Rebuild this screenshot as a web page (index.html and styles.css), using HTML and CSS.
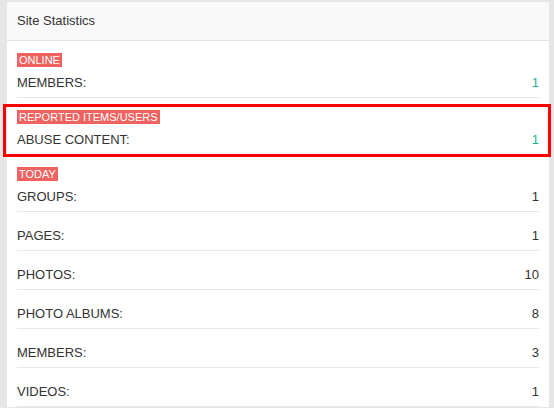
FILE: index.html
```html
<!DOCTYPE html>
<html>
<head>
<meta charset="utf-8">
<link rel="stylesheet" href="styles.css">
</head>
<body>
<div class="panel">
  <div class="panel-heading">Site Statistics</div>
  <div class="panel-body">
    <div class="section">
      <span class="tag">Online</span>
      <div class="row"><span>MEMBERS:</span><span class="val ok">1</span></div>
    </div>
    <div class="section marked">
      <span class="tag">Reported Items/Users</span>
      <div class="row"><span>ABUSE CONTENT:</span><span class="val ok">1</span></div>
    </div>
    <div class="section">
      <span class="tag">Today</span>
      <div class="row"><span>GROUPS:</span><span class="val">1</span></div>
      <div class="row"><span>PAGES:</span><span class="val">1</span></div>
      <div class="row"><span>PHOTOS:</span><span class="val">10</span></div>
      <div class="row"><span>PHOTO ALBUMS:</span><span class="val">8</span></div>
      <div class="row"><span>MEMBERS:</span><span class="val">3</span></div>
      <div class="row"><span>VIDEOS:</span><span class="val">1</span></div>
    </div>
  </div>
</div>
</body>
</html>
```
FILE: styles.css
```css
html, body {
  margin: 0;
  padding: 0;
}
body {
  background: #e6e6e6;
  padding: 2px 5px 0 7px;
  font-family: "Liberation Sans", Arial, sans-serif;
  font-size: 13px;
  color: #333;
}
.panel {
  background: #fff;
}
.panel-heading {
  background: #f9f9f9;
  height: 38px;
  line-height: 38px;
  padding: 0 10px;
  border-bottom: 1px solid #e3e3e3;
}
.panel-body {
  padding: 12px 10px 0 10px;
}
.section {
  position: relative;
  margin-bottom: 12px;
}
.tag {
  display: inline-block;
  background: #f0625f;
  color: #fff;
  font-size: 11px;
  line-height: 12px;
  padding: 1px 2px;
  text-transform: uppercase;
  vertical-align: top;
}
.row {
  display: flex;
  justify-content: space-between;
  line-height: 18px;
  padding: 15px 0 5px;
  border-bottom: 1px solid #e8e8e8;
}
.tag + .row {
  padding-top: 6px;
}
.val.ok {
  color: #1ab394;
}
.marked::after {
  content: "";
  position: absolute;
  top: -6px;
  bottom: -2px;
  left: -14px;
  right: -12px;
  border: 3px solid #ff0000;
  pointer-events: none;
}
```
